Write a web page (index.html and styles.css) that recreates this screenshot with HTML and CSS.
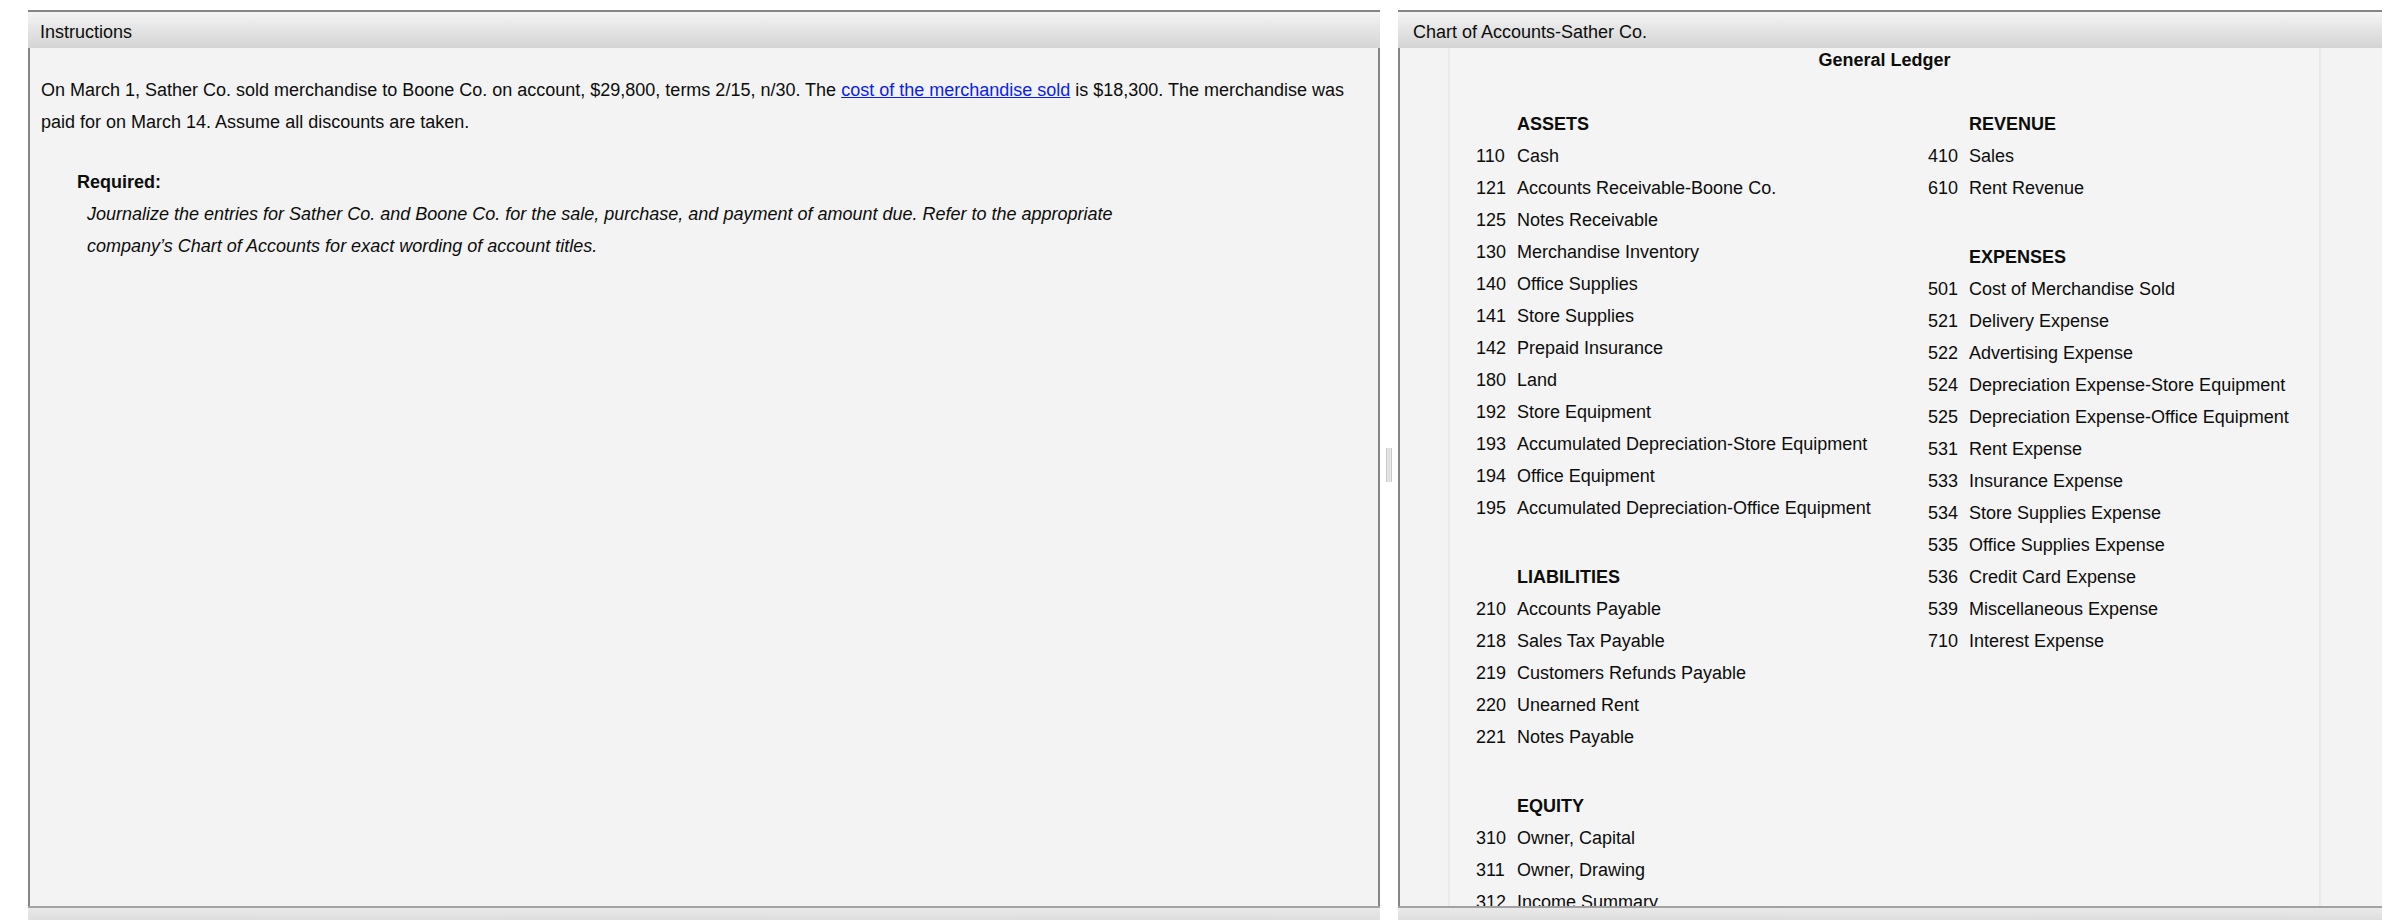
FILE: index.html
```html
<!DOCTYPE html>
<html lang="en">
<head>
  <meta charset="UTF-8">
  <title>Instructions - Chart of Accounts</title>
  <meta name="viewport" content="width=device-width, initial-scale=1.0">
  <link rel="stylesheet" href="styles.css">
</head>
<body>
  <div class="workspace">
    <!-- Instructions pane -->
    <section class="panel panel-instructions">
      <div class="panel-header">Instructions</div>
      <div class="panel-body">
        <p class="intro">On March 1, Sather Co. sold merchandise to Boone Co. on account, $29,800, terms 2/15, n/30. The <a href="#">cost of the merchandise sold</a> is $18,300. The merchandise was paid for on March 14. Assume all discounts are taken.</p>
        <div class="required">
          <h4>Required:</h4>
          <p>Journalize the entries for Sather Co. and Boone Co. for the sale, purchase, and payment of amount due. Refer to the appropriate company’s Chart of Accounts for exact wording of account titles.</p>
        </div>
      </div>
      <div class="panel-footer"></div>
    </section>

    <div class="splitter"><span class="splitter-handle"></span></div>

    <!-- Chart of accounts pane -->
    <section class="panel panel-chart">
      <div class="panel-header">Chart of Accounts-Sather Co.</div>
      <div class="panel-body">
        <div class="ledger">
          <div class="ledger-title">General Ledger</div>
          <div class="ledger-columns">
            <div class="ledger-col">
              <div class="section">
                <h3>ASSETS</h3>
                <div class="account"><span class="num">110</span>Cash</div>
                <div class="account"><span class="num">121</span>Accounts Receivable-Boone Co.</div>
                <div class="account"><span class="num">125</span>Notes Receivable</div>
                <div class="account"><span class="num">130</span>Merchandise Inventory</div>
                <div class="account"><span class="num">140</span>Office Supplies</div>
                <div class="account"><span class="num">141</span>Store Supplies</div>
                <div class="account"><span class="num">142</span>Prepaid Insurance</div>
                <div class="account"><span class="num">180</span>Land</div>
                <div class="account"><span class="num">192</span>Store Equipment</div>
                <div class="account"><span class="num">193</span>Accumulated Depreciation-Store Equipment</div>
                <div class="account"><span class="num">194</span>Office Equipment</div>
                <div class="account"><span class="num">195</span>Accumulated Depreciation-Office Equipment</div>
              </div>
              <div class="section">
                <h3>LIABILITIES</h3>
                <div class="account"><span class="num">210</span>Accounts Payable</div>
                <div class="account"><span class="num">218</span>Sales Tax Payable</div>
                <div class="account"><span class="num">219</span>Customers Refunds Payable</div>
                <div class="account"><span class="num">220</span>Unearned Rent</div>
                <div class="account"><span class="num">221</span>Notes Payable</div>
              </div>
              <div class="section">
                <h3>EQUITY</h3>
                <div class="account"><span class="num">310</span>Owner, Capital</div>
                <div class="account"><span class="num">311</span>Owner, Drawing</div>
                <div class="account"><span class="num">312</span>Income Summary</div>
              </div>
            </div>
            <div class="ledger-col">
              <div class="section">
                <h3>REVENUE</h3>
                <div class="account"><span class="num">410</span>Sales</div>
                <div class="account"><span class="num">610</span>Rent Revenue</div>
              </div>
              <div class="section">
                <h3>EXPENSES</h3>
                <div class="account"><span class="num">501</span>Cost of Merchandise Sold</div>
                <div class="account"><span class="num">521</span>Delivery Expense</div>
                <div class="account"><span class="num">522</span>Advertising Expense</div>
                <div class="account"><span class="num">524</span>Depreciation Expense-Store Equipment</div>
                <div class="account"><span class="num">525</span>Depreciation Expense-Office Equipment</div>
                <div class="account"><span class="num">531</span>Rent Expense</div>
                <div class="account"><span class="num">533</span>Insurance Expense</div>
                <div class="account"><span class="num">534</span>Store Supplies Expense</div>
                <div class="account"><span class="num">535</span>Office Supplies Expense</div>
                <div class="account"><span class="num">536</span>Credit Card Expense</div>
                <div class="account"><span class="num">539</span>Miscellaneous Expense</div>
                <div class="account"><span class="num">710</span>Interest Expense</div>
              </div>
            </div>
          </div>
        </div>
      </div>
      <div class="panel-footer"></div>
    </section>
  </div>
</body>
</html>
```

FILE: styles.css
```css
body {
  margin: 0;
  background: #fff;
  color: #0d0d0d;
  font-family: "Liberation Sans", Arial, Helvetica, sans-serif;
  font-size: 18px;
  overflow: hidden;
}
.workspace {
  display: flex;
  align-items: stretch;
  height: 920px;
  padding: 10px 0 0 28px;
  box-sizing: border-box;
}
.panel {
  display: flex;
  flex-direction: column;
  flex: none;
  height: 922px;
  border-top: 2px solid #858585;
  box-sizing: border-box;
}
.panel-instructions { width: 1352px; }
.panel-chart { width: 1100px; }
.panel-header {
  height: 36px;
  line-height: 40px;
  padding: 0 12px;
  background: linear-gradient(#f4f4f4, #d4d4d4);
  white-space: nowrap;
}
.panel-chart .panel-header { padding-left: 15px; }
.panel-body {
  flex: 1;
  min-height: 0;
  overflow: hidden;
  background: #f2f3f2;
  border-left: 2px solid #858585;
  border-right: 2px solid #858585;
  padding: 0 11px;
}
.panel-footer {
  height: 24px;
  flex: none;
  border-top: 2px solid #a2a2a2;
  background: linear-gradient(#e9e9e9, #d3d3d3);
}

/* instructions */
.intro { margin: 27px 0 0; line-height: 31.5px; }
.intro a { color: #0a1ef0; }
.required { margin: 28px 0 0 36px; line-height: 32px; }
.required h4 { margin: 0; font-size: 18px; }
.required p {
  margin: 0 0 0 10px;
  max-width: 1065px;
  font-style: italic;
}

/* splitter between panes */
.splitter {
  width: 18px;
  flex: none;
  display: flex;
  align-items: center;
  justify-content: center;
}
.splitter-handle {
  display: block;
  width: 4px;
  height: 34px;
  border-left: 1px solid #c8c8c8;
  border-right: 1px solid #c8c8c8;
  background: linear-gradient(90deg, #ececec, #dcdcdc 50%, #ececec);
}

/* chart of accounts */
.panel-chart .panel-body { padding: 0 0 0 48px; }
.ledger {
  width: 873px;
  height: 100%;
  box-sizing: border-box;
  padding-top: 1px;
  border-left: 2px solid #e9eae9;
  border-right: 2px solid #e9eae9;
  background: #f3f4f3;
}
.ledger-title {
  text-align: center;
  font-weight: bold;
  line-height: 22px;
}
.ledger-columns {
  display: grid;
  grid-template-columns: 452px 1fr;
  padding-left: 26px;
}
.section { margin-top: 37px; }
.section h3 {
  margin: 0 0 0 41px;
  font-size: 18px;
  line-height: 32px;
}
.account {
  display: flex;
  line-height: 32px;
  white-space: nowrap;
}
.num { width: 41px; flex: none; }
```
